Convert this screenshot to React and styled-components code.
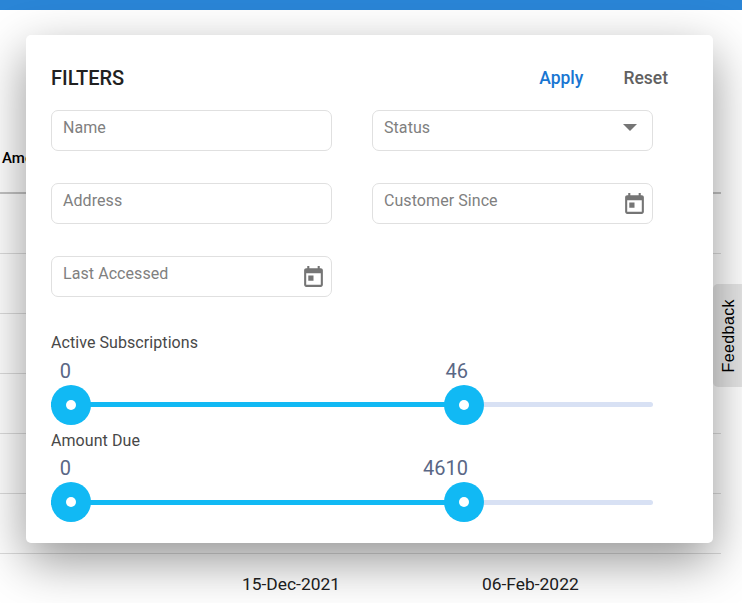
import React from "react";
import styled, { createGlobalStyle } from "styled-components";

const Global = createGlobalStyle`
  html, body { margin: 0; padding: 0; background: #fff; }
  body { width: 742px; height: 603px; overflow: hidden; font-family: Roboto, "Liberation Sans", sans-serif; }
`;
const Page = styled.div`
  position: relative;
  width: 742px;
  height: 603px;
  overflow: hidden;
  background: #fff;
`;
const TopBar = styled.div`
  height: 10px;
  background: #2a85d6;
`;
const Table = styled.div`
  width: 721px;
  padding-top: 130px;
`;
const HeaderRow = styled.div`
  height: 52px;
  border-bottom: 2px solid #c4c4c4;
  padding: 10px 0 0 2px;
  box-sizing: content-box;
  margin-top: -10px;
  font-size: 15px;
  line-height: 36px;
  font-weight: 500;
  color: #000;
`;
const Row = styled.div`
  height: 59px;
  border-bottom: 1px solid #dcdcdc;
`;
const LastRow = styled.div`
  display: flex;
  height: 60px;
  align-items: center;
  font-size: 17.4px;
  color: #212121;
`;
const DateCell = styled.span`
  width: ${(p) => p.$w}px;
  flex: none;
  margin-left: ${(p) => p.$ml}px;
`;
const Modal = styled.div`
  position: absolute;
  left: 26px;
  top: 35px;
  width: 687px;
  height: 508px;
  box-sizing: border-box;
  background: #fff;
  border-radius: 5px;
  padding: 30px 25px 0;
  box-shadow: 0 18px 50px rgba(0,0,0,.42);
`;
const Head = styled.div`
  display: flex;
  align-items: center;
  justify-content: space-between;
  height: 26px;
  margin-bottom: 19px;
`;
const Title = styled.div`
  font-size: 20px;
  font-weight: 500;
  color: #212121;
`;
const Actions = styled.div`
  display: flex;
  gap: 40px;
  padding-right: 20px;
`;
const Action = styled.button`
  background: none;
  border: 0;
  padding: 0;
  font: 500 17.5px Roboto, sans-serif;
  color: ${(p) => (p.$primary ? "#1976d2" : "#616161")};
`;
const Fields = styled.div`
  display: grid;
  grid-template-columns: 281px 281px;
  column-gap: 40px;
  row-gap: 32px;
`;
const Field = styled.div`
  height: 41px;
  box-sizing: border-box;
  border: 1px solid #e0e0e0;
  border-radius: 7px;
  display: flex;
  justify-content: space-between;
  padding: 7px 5px 0 11px;
  font-size: 16px;
  line-height: 19px;
  letter-spacing: .07px;
  color: #808080;
`;
const IconSlot = styled.span`
  display: flex;
  margin-top: ${(p) => p.$mt || 0}px;
  margin-right: ${(p) => p.$mr || 0}px;
`;
const Sliders = styled.div`
  margin-top: 36px;
`;
const SliderLabel = styled.div`
  font-size: 16px;
  line-height: 19px;
  letter-spacing: .07px;
  color: #484848;
`;
const SliderBody = styled.div`
  position: relative;
  width: 602px;
  height: ${(p) => p.$h}px;
  margin-bottom: 6px;
`;
const Track = styled.div`
  position: absolute;
  left: 0;
  right: 0;
  bottom: ${(p) => p.$b}px;
  height: 5px;
  border-radius: 3px;
  background: #d8e1f4;
`;
const Fill = styled.div`
  height: 100%;
  background: #11b9f4;
`;
const Thumb = styled.div`
  position: absolute;
  bottom: 0;
  width: 40px;
  height: 40px;
  border-radius: 50%;
  background: #11b9f4;
  transform: translateX(-50%);
  display: flex;
  align-items: center;
  justify-content: center;
  &::after {
    content: "";
    width: 10px;
    height: 10px;
    border-radius: 50%;
    background: #fff;
  }
`;
const Val = styled.div`
  position: absolute;
  bottom: 42px;
  font-size: 20px;
  line-height: 24px;
  color: #5a6785;
  transform: translateX(-100%);
`;
const Feedback = styled.div`
  position: absolute;
  right: 0;
  top: 284px;
  width: 29px;
  height: 103px;
  box-sizing: border-box;
  padding-left: 3px;
  background: #e6e6e6;
  border-radius: 5px 0 0 5px;
  display: flex;
  align-items: center;
  justify-content: center;
  font: 16px "Liberation Sans", Arial, sans-serif;
  color: #000;
`;
const FeedbackText = styled.span`
  writing-mode: vertical-rl;
  transform: rotate(180deg);
  letter-spacing: .4px;
`;

const Cal = () => (
  <svg width="25" height="25" viewBox="0 0 24 24" fill="#757575">
    <path d="M19 3h-1V1h-2v2H8V1H6v2H5c-1.11 0-2 .9-2 2v14c0 1.1.89 2 2 2h14c1.1 0 2-.9 2-2V5c0-1.1-.9-2-2-2zm0 16H5V8h14v11zM7 10h5v5H7z" />
  </svg>
);
const Caret = () => (
  <svg width="14" height="7" viewBox="0 0 14 7" fill="#757575">
    <path d="M0 0h14L7 7z" />
  </svg>
);

const Slider = ({ label, hi, pct, h, tb }) => (
  <>
    <SliderLabel>{label}</SliderLabel>
    <SliderBody $h={h}>
      <Track $b={tb}><Fill style={{ width: `${pct}%` }} /></Track>
      <Thumb style={{ left: 20 }} />
      <Thumb style={{ left: `${pct}%` }} />
      <Val style={{ left: 20 }}>0</Val>
      <Val style={{ left: `calc(${pct}% + 4px)` }}>{hi}</Val>
    </SliderBody>
  </>
);

export default function App() {
  return (
    <Page>
      <Global />
      <TopBar />
      <Table>
        <HeaderRow>Amount</HeaderRow>
        {[0, 1, 2, 3, 4, 5].map((i) => <Row key={i} />)}
        <LastRow>
          <DateCell $ml={242} $w={240}>15-Dec-2021</DateCell>
          <DateCell $ml={0} $w={120}>06-Feb-2022</DateCell>
        </LastRow>
      </Table>
      <Feedback><FeedbackText>Feedback</FeedbackText></Feedback>
      <Modal>
        <Head>
          <Title>FILTERS</Title>
          <Actions>
            <Action $primary>Apply</Action>
            <Action>Reset</Action>
          </Actions>
        </Head>
        <Fields>
          <Field>Name</Field>
          <Field>Status<IconSlot $mt={6} $mr={10}><Caret /></IconSlot></Field>
          <Field>Address</Field>
          <Field>Customer Since<IconSlot $mt={1}><Cal /></IconSlot></Field>
          <Field>Last Accessed<IconSlot $mt={1}><Cal /></IconSlot></Field>
        </Fields>
        <Sliders>
          <Slider label="Active Subscriptions" hi="46" pct={68.6} h={73} tb={18} />
          <Slider label="Amount Due" hi="4610" pct={68.6} h={72} tb={17} />
        </Sliders>
      </Modal>
    </Page>
  );
}
